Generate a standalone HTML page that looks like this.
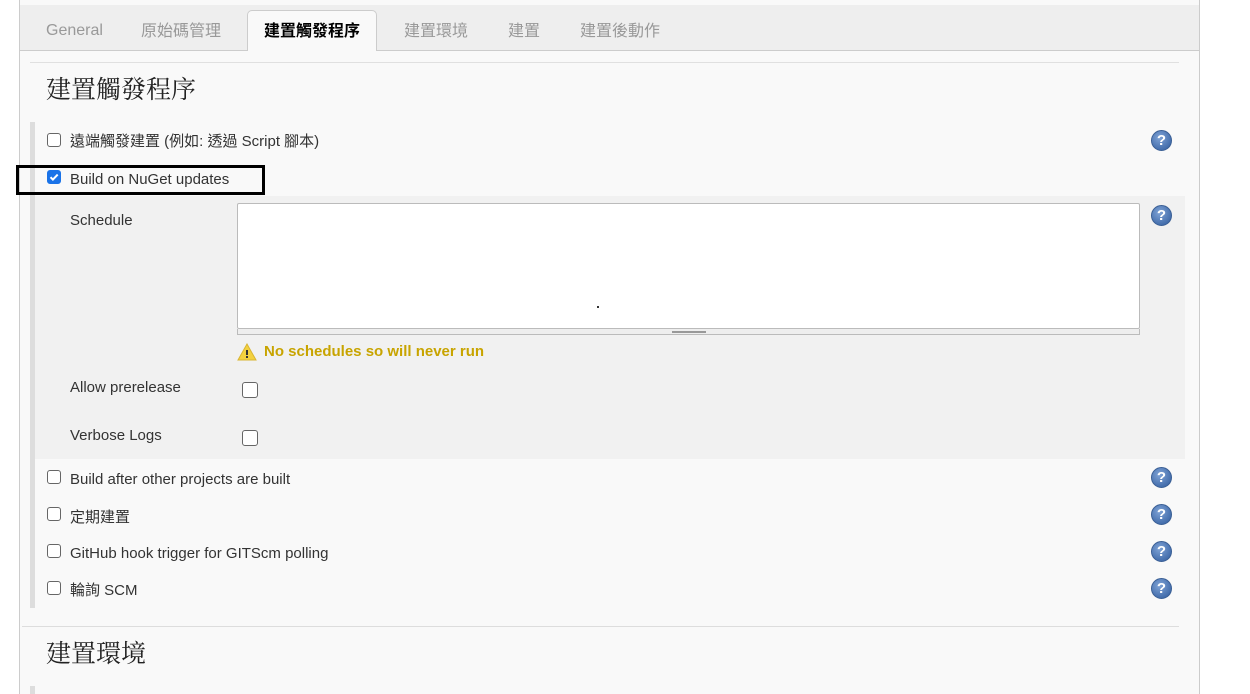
<!DOCTYPE html>
<html><head><meta charset="utf-8"><style>
*{box-sizing:border-box;margin:0;padding:0}
body{width:1250px;height:694px;background:#fff;position:relative;overflow:hidden;font-family:"Liberation Sans","Noto Sans CJK TC",sans-serif;font-size:15px;color:#333}
.a{position:absolute}
.panel{left:19px;top:0;width:1181px;height:694px;background:#f9f9f9;border-left:1px solid #ccc;border-right:1px solid #ccc}
.tabs{left:20px;top:5px;width:1179px;height:46px;background:#eee;border-bottom:1px solid #ccc}
.tab{position:absolute;top:22px;color:#999;font-size:16px;line-height:20px;height:20px}
.act{left:247px;top:10px;width:130px;height:41px;background:#f9f9f9;border:1px solid #ccc;border-bottom:none;border-radius:5px 5px 0 0;font-weight:bold;color:#000;font-size:16px;text-align:center;padding-top:11px;line-height:20px}
h2{position:absolute;font-family:"Liberation Serif","Noto Serif CJK SC",serif;font-weight:normal;font-size:25px;line-height:30px;color:#222}
.bar{background:#ddd;width:5px}
.cb{position:absolute;width:14px;height:14px;border:1px solid #666;border-radius:3px;background:#fff}
.cbk{background:#1a73e8;border-color:#1a73e8}
.lbl{position:absolute;font-size:15px;color:#333;line-height:18px;height:18px}
.help{position:absolute;width:21px;height:21px;border-radius:50%;background:radial-gradient(circle at 40% 35%,#7fa3d6,#2e5a9c);border:1px solid #3a5f95;color:#fff;font-weight:bold;font-size:15px;text-align:center;line-height:19px}
</style></head><body>
<div class="a panel"></div>
<div class="a tabs"></div>
<div class="tab" style="left:46px;top:21px">General</div>
<div class="tab" style="left:141px">原始碼管理</div>
<div class="a act">建置觸發程序</div>
<div class="tab" style="left:404px">建置環境</div>
<div class="tab" style="left:508px">建置</div>
<div class="tab" style="left:580px">建置後動作</div>
<div class="a" style="left:30px;top:62px;width:1149px;height:1px;background:#e0e0e0"></div>
<h2 style="left:46px;top:76px">建置觸發程序</h2>
<div class="a bar" style="left:30px;top:122px;height:486px"></div>
<div class="a" style="left:35px;top:196px;width:1150px;height:263px;background:#f1f1f1"></div>

<div class="cb" style="left:47px;top:133px"></div>
<div class="lbl" style="left:70px;top:133px">遠端觸發建置 (例如: 透過 Script 腳本)</div>
<div class="help" style="left:1151px;top:130px">?</div>

<div class="cb cbk" style="left:47px;top:170px"><svg width="12" height="12" viewBox="0 0 12 12" style="position:absolute;left:0;top:0"><path d="M2.5 6.2l2.4 2.4 4.8-5" stroke="#fff" stroke-width="2" fill="none"/></svg></div>
<div class="lbl" style="left:70px;top:171px">Build on NuGet updates</div>
<div class="a" style="left:16px;top:165px;width:249px;height:30px;border:3px solid #000"></div>

<div class="lbl" style="left:70px;top:212px">Schedule</div>
<div class="a" style="left:237px;top:203px;width:903px;height:126px;background:#fff;border:1px solid #bbb;border-radius:2px"></div>
<div class="a" style="left:597px;top:306px;width:2px;height:2px;background:#333"></div>
<div class="a" style="left:237px;top:329px;width:903px;height:6px;background:#eee;border:1px solid #bbb;border-top:none"></div>
<div class="a" style="left:672px;top:331px;width:34px;height:2px;border-top:1px solid #999;border-bottom:1px solid #999"></div>
<div class="help" style="left:1151px;top:205px">?</div>
<svg class="a" style="left:237px;top:343px" width="20" height="18" viewBox="0 0 20 18"><path d="M10 1L19 17H1Z" fill="#f3d13f" stroke="#d9b531"/><rect x="9" y="7" width="2" height="5" fill="#333"/><rect x="9" y="13" width="2" height="2" fill="#333"/></svg>
<div class="lbl" style="left:264px;top:343px;color:#c8a400;font-weight:bold;font-size:15px">No schedules so will never run</div>

<div class="lbl" style="left:70px;top:379px">Allow prerelease</div>
<div class="cb" style="left:242px;top:382px;width:16px;height:16px"></div>
<div class="lbl" style="left:70px;top:427px">Verbose Logs</div>
<div class="cb" style="left:242px;top:430px;width:16px;height:16px"></div>

<div class="cb" style="left:47px;top:470px"></div>
<div class="lbl" style="left:70px;top:471px">Build after other projects are built</div>
<div class="help" style="left:1151px;top:467px">?</div>
<div class="cb" style="left:47px;top:507px"></div>
<div class="lbl" style="left:70px;top:509px">定期建置</div>
<div class="help" style="left:1151px;top:504px">?</div>
<div class="cb" style="left:47px;top:544px"></div>
<div class="lbl" style="left:70px;top:545px">GitHub hook trigger for GITScm polling</div>
<div class="help" style="left:1151px;top:541px">?</div>
<div class="cb" style="left:47px;top:581px"></div>
<div class="lbl" style="left:70px;top:582px">輪詢 SCM</div>
<div class="help" style="left:1151px;top:578px">?</div>

<div class="a" style="left:22px;top:626px;width:1157px;height:1px;background:#ddd"></div>
<h2 style="left:46px;top:640px">建置環境</h2>
<div class="a bar" style="left:30px;top:686px;height:8px"></div>
</body></html>
